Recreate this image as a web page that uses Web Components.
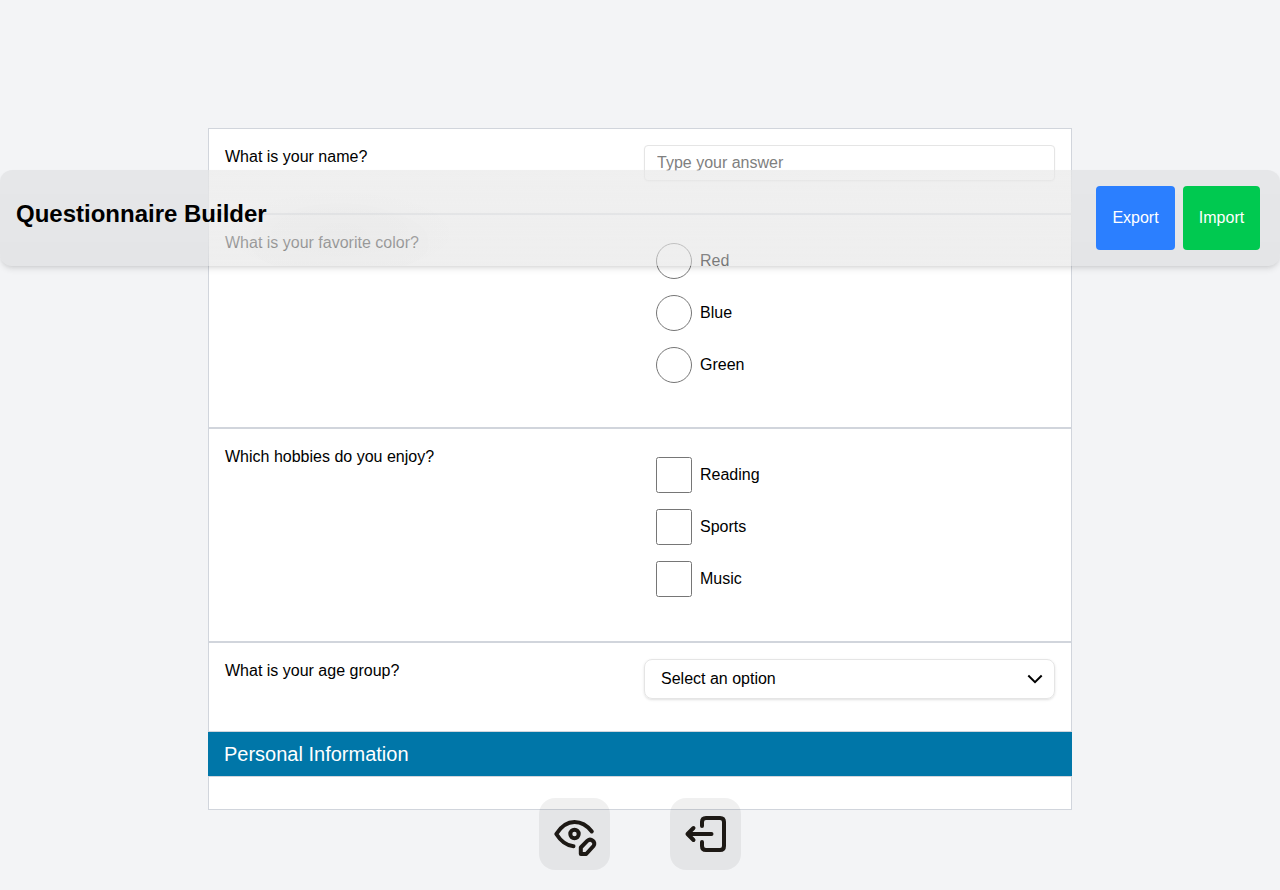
<!DOCTYPE html>
<html lang="en">
<head>
<meta charset="utf-8">
<title>Questionnaire Builder</title>
<style>
html, body { margin: 0; height: 100%; }
body { background: #f3f4f6; color: #000; font: 16px/24px "Liberation Sans", Arial, sans-serif; overflow: hidden; }
</style>
</head>
<body>
<questionnaire-app></questionnaire-app>
<script>
const define = (name, html) => {
  const template = document.createElement('template');
  template.innerHTML = html;
  customElements.define(name, class extends HTMLElement {
    constructor() {
      super();
      this.attachShadow({ mode: 'open' }).append(template.content.cloneNode(true));
    }
  });
};
const box = '*, :host { box-sizing: border-box; }';

define('question-card', `<style>${box}
:host { display: grid; grid-template-columns: 1fr 411px; column-gap: 8px; align-items: start; height: var(--h); padding: 16px; background: #fff; border: 1px solid #d1d5dc; }
.label { line-height: 24px; }
</style><div class="label"><slot name="label"></slot></div><div><slot></slot></div>`);

define('text-answer', `<style>${box}
:host { display: block; }
input { display: block; width: 100%; height: 36px; margin: 0; padding: 0 12px 1px; border: 1px solid #e5e5e5; border-radius: 4px; background: #fff; font: inherit; box-shadow: 0 1px 2px rgba(0,0,0,.05); outline: none; }
input::placeholder { color: #808080; opacity: 1; }
</style><input placeholder="Type your answer">`);

define('choice-list', `<style>${box}
:host { display: flex; flex-direction: column; gap: 16px; padding: 12px; }
</style><slot></slot>`);

define('choice-item', `<style>${box}
:host { display: flex; align-items: center; gap: 8px; height: 36px; }
i { width: 36px; height: 36px; border: 1px solid #767676; border-radius: 2.5px; background: #fff; }
:host([round]) i { border-radius: 50%; }
</style><i></i><span><slot></slot></span>`);

define('select-box', `<style>${box}
:host { display: flex; align-items: center; justify-content: space-between; height: 40px; padding: 0 11px 0 16px; border: 1px solid #e5e5e5; border-radius: 8px; box-shadow: 0 1px 3px rgba(0,0,0,.1), 0 1px 2px -1px rgba(0,0,0,.1); }
svg { display: block; }
</style><slot></slot><svg width="16" height="16" viewBox="0 0 16 16" fill="none" stroke="#000" stroke-width="2"><path d="M1.3 4.5 8 11.2l6.7-6.7"/></svg>`);

define('section-title', `<style>${box}
:host { display: flex; align-items: center; height: 44px; padding: 0 16px; background: #0076a8; color: #fff; font-size: 20px; line-height: 28px; }
</style><slot></slot>`);

define('action-button', `<style>${box}
:host { display: flex; align-items: center; justify-content: center; height: 64px; width: var(--w); border-radius: 4px; background: var(--bg); color: #fff; }
</style><slot></slot>`);

define('top-bar', `<style>${box}
:host { position: absolute; z-index: 2; left: 0; right: 0; top: 170px; height: 96px; padding: 16px 20px 16px 16px; display: flex; justify-content: space-between; align-items: flex-start; border-radius: 12px;
  background:
    radial-gradient(130px 50px at 340px 65px, rgba(0,0,0,.02), transparent) no-repeat,
    linear-gradient(rgba(0,0,0,.05), rgba(0,0,0,.058)) 0 0 / 208px 100% no-repeat,
    linear-gradient(rgba(0,0,0,.05), rgba(0,0,0,.058)) 100% 0 / 208px 100% no-repeat,
    linear-gradient(rgba(231,231,231,.65), rgba(234,234,234,.75) 45%, rgba(231,231,231,.68) 75%, rgba(223,223,223,.5)) 208px 0 / 864px 100% no-repeat;
  box-shadow: 0 4px 6px -1px rgba(0,0,0,.1), 0 2px 4px -2px rgba(0,0,0,.1); }
h1 { margin: 12px 0 0; font-size: 24px; line-height: 32px; font-weight: 700; }
div { display: flex; gap: 8px; }
</style><h1><slot></slot></h1><div><slot name="actions"></slot></div>`);

define('tool-button', `<style>${box}
:host { display: flex; width: 71px; height: 72px; border-radius: 16px; background: rgba(0,0,0,.058); }
</style><slot></slot>`);

define('bottom-tools', `<style>${box}
:host { position: absolute; z-index: 2; left: 0; right: 0; bottom: 20px; display: flex; justify-content: center; gap: 60px; }
svg { display: block; }
g { fill: none; stroke: #1d1915; stroke-width: 4; stroke-linecap: round; stroke-linejoin: round; }
</style>
<tool-button><svg width="71" height="72" viewBox="0.5 0 71 72"><g>
<path d="M53.3 33.5C48.5 27.3 42.5 24 36 24C28 24 22.2 29 17.8 36C22.2 43 28 47.7 35 48.2"/><circle cx="36" cy="36" r="4.2"/>
<path d="M42.3 56V49.5L49 42.7C52.3 39.8 58 44.3 55 48L47.7 56Z"/></g></svg></tool-button>
<tool-button><svg width="71" height="72" viewBox="0.5 0 71 72"><g>
<path d="M32.5 28V24Q32.5 20 36.5 20H50.5Q54.5 20 54.5 24V48Q54.5 52 50.5 52H36.5Q32.5 52 32.5 48V44M42 36H18M24 30L18 36L24 42"/></g></svg></tool-button>`);

define('questionnaire-app', `<style>${box}
:host { display: block; position: relative; height: 890px; padding-top: 128px; }
main { width: 864px; margin: 0 auto; }
</style>
<main>
<question-card style="--h:86px"><span slot="label">What is your name?</span><text-answer></text-answer></question-card>
<question-card style="--h:214px"><span slot="label">What is your favorite color?</span><choice-list><choice-item round>Red</choice-item><choice-item round>Blue</choice-item><choice-item round>Green</choice-item></choice-list></question-card>
<question-card style="--h:214px"><span slot="label">Which hobbies do you enjoy?</span><choice-list><choice-item>Reading</choice-item><choice-item>Sports</choice-item><choice-item>Music</choice-item></choice-list></question-card>
<question-card style="--h:90px"><span slot="label">What is your age group?</span><select-box>Select an option</select-box></question-card>
<section-title>Personal Information</section-title>
<question-card style="--h:34px"></question-card>
</main>
<top-bar>Questionnaire Builder<action-button slot="actions" style="--w:79px;--bg:#2b7fff">Export</action-button><action-button slot="actions" style="--w:77px;--bg:#00c950">Import</action-button></top-bar>
<bottom-tools></bottom-tools>`);
</script>
</body>
</html>
